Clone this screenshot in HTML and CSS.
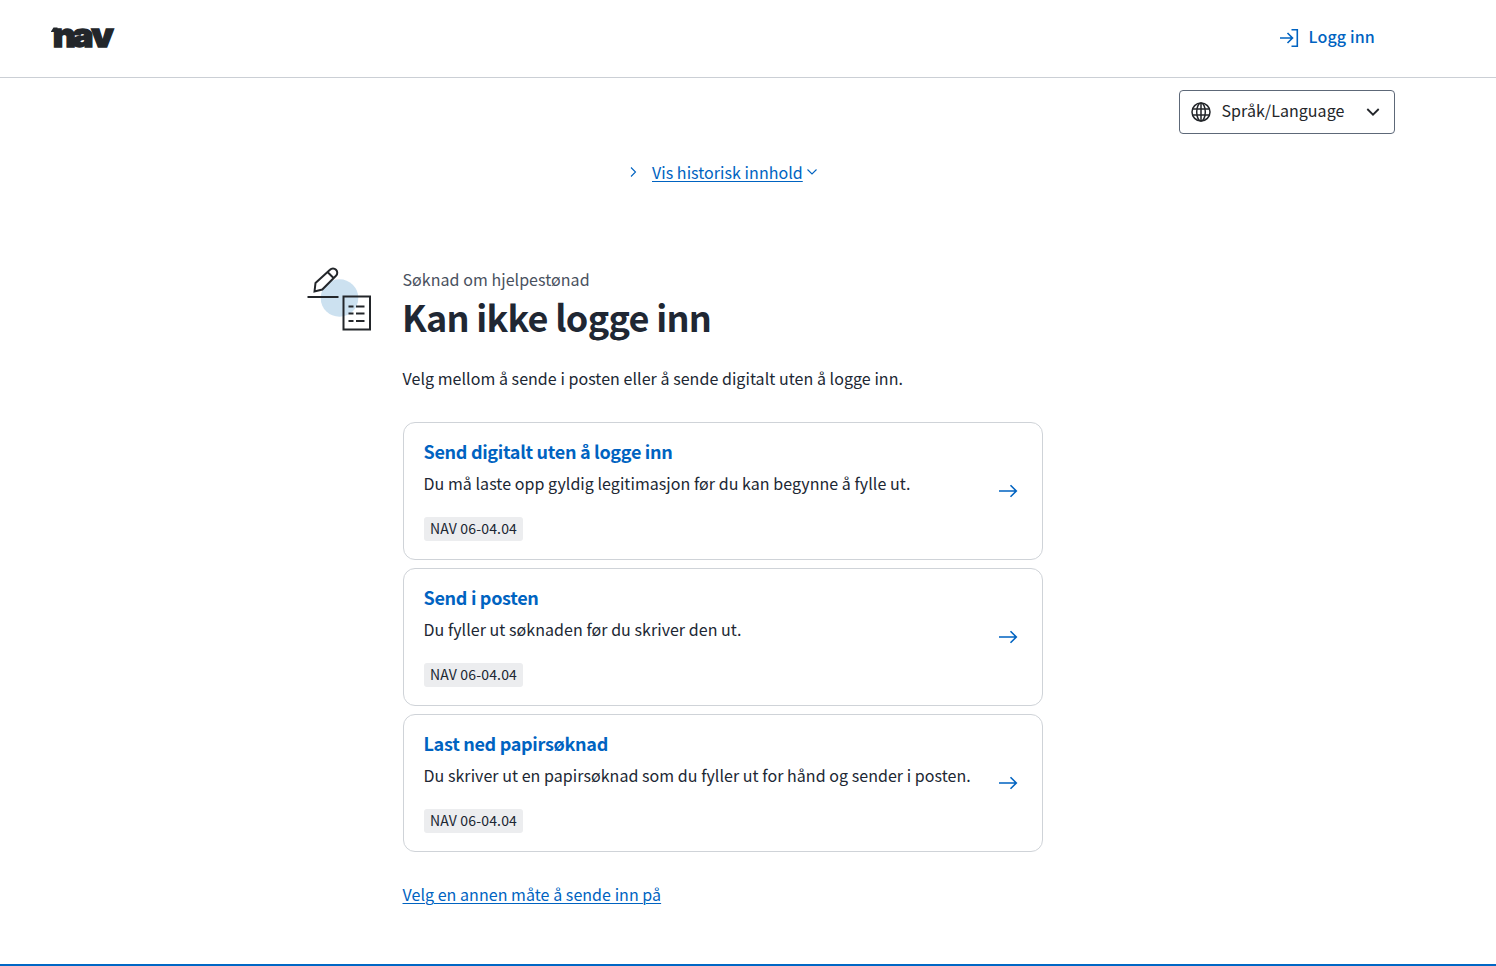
FILE: index.html
```html
<!DOCTYPE html>
<html lang="nb">
<head>
    <meta charset="UTF-8">
    <title>Søknad om hjelpestønad - nav.no</title>
    <link rel="stylesheet" href="styles.css">
</head>
<body>

<header class="header">
    <a href="/" class="logo" aria-label="nav">
        <svg width="68" height="56" viewBox="0 0 68 56">
            <text class="logo-text" transform="scale(1.08 1)" x="2.500 20.500 38.300" y="36.700">nav</text>
            <path d="M1 21.500l2.500-4h4v4.500H1z"/>
        </svg>
    </a>
    <a href="/login" class="login">
        <svg width="20" height="20" viewBox="0 0 20 20">
            <path d="M1 10h12M8.500 5l5 5-5 5M12.500 1.700h5.800v16.600h-5.800"/>
        </svg>
        <span>Logg inn</span>
    </a>
</header>

<div class="language-row">
    <button class="language" type="button">
        <svg class="globe" width="20" height="20" viewBox="0 0 20 20">
            <circle cx="10" cy="10" r="9"/>
            <ellipse cx="10" cy="10" rx="4.300" ry="9"/>
            <path d="M10 1v18M1.500 7h17M1.500 13h17"/>
        </svg>
        <span class="language-label">Språk/Language</span>
        <svg class="language-chevron" width="14" height="8" viewBox="0 0 14 8">
            <path d="M1.300 1l5.700 5.700L12.700 1"/>
        </svg>
    </button>
</div>

<div class="history">
    <svg width="8" height="12" viewBox="0 0 8 12"><path d="M2 1.500L6.500 6 2 10.500"/></svg>
    <a href="#">Vis historisk innhold</a>
    <svg width="12" height="8" viewBox="0 0 12 8"><path d="M1.500 1.500L6 6l4.500-4.500"/></svg>
</div>

<main class="main">
    <svg class="pictogram" width="64" height="64" viewBox="0 0 64 64">
        <circle cx="32.500" cy="31" r="18.800" fill="#cce1f0"/>
        <path d="M0.500 30h31"/>
        <path d="M7.500 24.500l1-8.500L23 2.800a4.200 4.200 0 0 1 6 0a4.200 4.200 0 0 1 0 6L15.300 22.500zM20.500 5l5.800 5.800"/>
        <path d="M36.500 29.500h26.500v33H36.500z"/>
        <path d="M41.500 39.500h5M49 39.500h8.500M41.500 46.500h5M49 46.500h8.500M41.500 54h5M49 54h8.500"/>
    </svg>
    <div class="content">
        <p class="form-name">Søknad om hjelpestønad</p>
        <h1>Kan ikke logge inn</h1>
        <p class="intro">Velg mellom å sende i posten eller å sende digitalt uten å logge inn.</p>

        <div class="cards">
            <a href="#" class="card">
                <div class="card-body">
                    <h2>Send digitalt uten å logge inn</h2>
                    <p class="card-text">Du må laste opp gyldig legitimasjon før du kan begynne å fylle ut.</p>
                    <span class="tag">NAV 06-04.04</span>
                </div>
                <svg class="arrow" width="20" height="14" viewBox="0 0 20 14"><path d="M1 7h17M12.500 1.200L18.300 7l-5.800 5.800"/></svg>
            </a>
            <a href="#" class="card">
                <div class="card-body">
                    <h2>Send i posten</h2>
                    <p class="card-text">Du fyller ut søknaden før du skriver den ut.</p>
                    <span class="tag">NAV 06-04.04</span>
                </div>
                <svg class="arrow" width="20" height="14" viewBox="0 0 20 14"><path d="M1 7h17M12.500 1.200L18.300 7l-5.800 5.800"/></svg>
            </a>
            <a href="#" class="card">
                <div class="card-body">
                    <h2>Last ned papirsøknad</h2>
                    <p class="card-text">Du skriver ut en papirsøknad som du fyller ut for hånd og sender i posten.</p>
                    <span class="tag">NAV 06-04.04</span>
                </div>
                <svg class="arrow" width="20" height="14" viewBox="0 0 20 14"><path d="M1 7h17M12.500 1.200L18.300 7l-5.800 5.800"/></svg>
            </a>
        </div>

        <a href="#" class="other-way">Velg en annen måte å sende inn på</a>
    </div>
</main>

<footer class="footer"></footer>

</body>
</html>
```

FILE: styles.css
```css
* {
    box-sizing: border-box;
}

body {
    margin: 0;
    height: 966px;
    overflow: hidden;
    display: flex;
    flex-direction: column;
    background: #fff;
    color: #202733;
    font-family: "Noto Sans CJK SC", "Open Sans", sans-serif;
    font-size: 16px;
    line-height: 28px;
    letter-spacing: 0.05px;
}

p, h1, h2 {
    margin: 0;
}

svg {
    display: block;
    flex: none;
    fill: none;
    stroke: currentColor;
    stroke-width: 1.6;
}

a {
    color: #0063c1;
    text-underline-offset: 2px;
    text-decoration-thickness: 1px;
}

.header {
    height: 78px;
    border-bottom: 1px solid #cbcfd5;
    display: flex;
    justify-content: space-between;
    align-items: center;
    padding: 0 121px 2px 50px;
}

.logo {
    color: #23262a;
}

.logo svg {
    fill: currentColor;
    stroke: none;
}

.logo-text {
    font-family: Inter, sans-serif;
    font-size: 33px;
    font-weight: 900;
    stroke: currentColor;
    stroke-width: 1.3;
}

.login {
    display: flex;
    align-items: center;
    gap: 10px;
    font-weight: 500;
    text-decoration: none;
    letter-spacing: 0.15px;
}

.login span {
    padding-bottom: 3px;
}

.language-row {
    display: flex;
    justify-content: flex-end;
    padding: 12px 101px 0 0;
}

.language {
    width: 216px;
    height: 44px;
    padding: 0 14px 0 11px;
    display: flex;
    align-items: center;
    background: #fff;
    border: 1px solid #5d6878;
    border-radius: 4px;
    color: #23262a;
    font-family: inherit;
    font-size: 16px;
    line-height: 28px;
    letter-spacing: 0.05px;
}

.globe {
    stroke-width: 1.5;
}

.language-label {
    margin: 0 auto 0 10.5px;
    padding-bottom: 4px;
}

.language-chevron {
    stroke-width: 1.8;
}

.history {
    display: flex;
    align-items: center;
    margin: 24px 0 0 629px;
    height: 28px;
    color: #0063c1;
}

.history svg {
    stroke-width: 1.1;
}

.history a {
    margin: 0 3px 0 15px;
}

.main {
    display: flex;
    gap: 32px;
    margin: 81px 0 0 307px;
    width: 736px;
}

.pictogram {
    color: #23262a;
    stroke-width: 2;
}

.pictogram circle {
    stroke: none;
}

.content {
    width: 640px;
    margin-top: -2px;
}

.form-name {
    color: #49515e;
}

h1 {
    font-size: 36px;
    line-height: 46px;
    font-weight: 700;
    letter-spacing: -0.72px;
    margin-left: -1px;
}

.intro {
    margin: 25px 0 30px;
}

.form-name, .intro, .other-way {
    text-indent: -0.5px;
}

.cards {
    display: flex;
    flex-direction: column;
    gap: 8px;
}

.card {
    height: 138px;
    padding: 15px 24px 18px 20px;
    display: flex;
    justify-content: space-between;
    align-items: flex-start;
    border: 1px solid #cfd3d8;
    border-radius: 12px;
    text-decoration: none;
}

.card-body {
    display: flex;
    flex-direction: column;
    align-items: flex-start;
}

h2 {
    font-size: 18px;
    line-height: 28px;
    font-weight: 700;
    letter-spacing: -0.3px;
    margin: -1px 0 4px -0.5px;
}

.card-text {
    color: #202733;
    white-space: nowrap;
    margin-left: -0.5px;
}

.tag {
    margin-top: 20px;
    height: 24px;
    padding: 0 6px;
    background: #ecedef;
    border-radius: 3px;
    color: #202733;
    font-size: 14px;
    line-height: 22px;
    letter-spacing: 0.17px;
}

.arrow {
    margin-top: 46px;
}

.other-way {
    display: inline-block;
    margin-top: 28px;
}

.footer {
    margin-top: auto;
    height: 2px;
    background: #0067c5;
}
```
